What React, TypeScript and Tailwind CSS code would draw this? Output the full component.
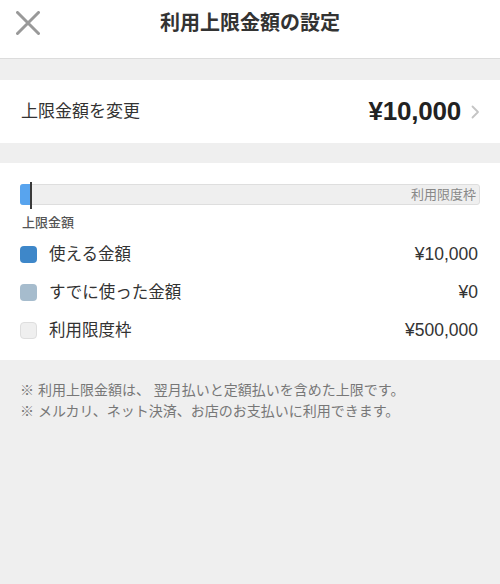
const jp = "font-['Liberation_Sans','Noto_Sans_CJK_JP',sans-serif]";

function LegendRow({ color, label, value }: { color: string; label: string; value: string }) {
  return (
    <div className="flex h-[38px] items-center justify-between pl-5 pr-[22px]">
      <div className="flex items-center">
        <span className={`h-[17px] w-[17px] rounded-[4px] ${color}`} />
        <span className="ml-[12px] text-[16.5px] text-[#333]">{label}</span>
      </div>
      <span className="text-[17.5px] text-[#333]">{value}</span>
    </div>
  );
}

export default function App() {
  return (
    <div className={`flex min-h-[584px] w-[500px] flex-col bg-[#efefef] ${jp}`}>
      {/* header */}
      <div className="relative flex h-[59px] items-center justify-center border-b border-[#dcdcdc] bg-white">
        <svg className="absolute left-[16px] top-[11px]" width="24" height="24" viewBox="0 0 24 24">
          <path d="M1.5 1.5 L22.5 22.5 M22.5 1.5 L1.5 22.5" stroke="#999" strokeWidth="3" strokeLinecap="round" />
        </svg>
        <h1 className="-mt-[12px] text-[20px] font-bold text-[#333]">利用上限金額の設定</h1>
      </div>

      {/* change limit row */}
      <div className="mt-[21px] flex h-[63px] items-center justify-between bg-white pl-[21px] pr-[20px]">
        <span className="text-[17px] text-[#333]">上限金額を変更</span>
        <div className="flex items-center">
          <span className="text-[26px] font-bold tracking-[-0.2px] text-[#222]">¥10,000</span>
          <svg className="ml-[10px] mt-[1px]" width="9" height="14" viewBox="0 0 9 14">
            <path d="M1.5 1.5 L7 7 L1.5 12.5" fill="none" stroke="#c4c4c4" strokeWidth="1.8" strokeLinecap="round" strokeLinejoin="round" />
          </svg>
        </div>
      </div>

      {/* summary */}
      <div className="mt-[20px] bg-white pb-[11px] pt-[21px]">
        <div className="px-5">
          <div className="relative flex h-[21px] items-center justify-end rounded-[3px] border border-[#dedede] bg-[#efefef] pr-[3px]">
            <span className="absolute -left-px -top-px h-[21px] w-[10px] rounded-l-[3px] bg-[#58a4ee]" />
            <span className="absolute -top-[3px] left-[9px] h-[27px] w-[2px] bg-[#3a3a3a]" />
            <span className="text-[13px] text-[#888]">利用限度枠</span>
          </div>
          <div className="mt-[9px] pl-[2px] text-[13px] font-medium leading-[18px] text-[#555]">上限金額</div>
        </div>
        <div className="mt-[3px]">
          <LegendRow color="bg-[#3e87c9]" label="使える金額" value="¥10,000" />
          <LegendRow color="bg-[#a6bccd]" label="すでに使った金額" value="¥0" />
          <LegendRow color="bg-[#efefef] border border-[#dedede]" label="利用限度枠" value="¥500,000" />
        </div>
      </div>

      {/* notes */}
      <div className="px-5 pt-[20px] text-[14px] leading-[21px] text-[#777]">
        <p>※ 利用上限金額は、 翌月払いと定額払いを含めた上限です。</p>
        <p>※ メルカリ、ネット決済、お店のお支払いに利用できます。</p>
      </div>
    </div>
  );
}
